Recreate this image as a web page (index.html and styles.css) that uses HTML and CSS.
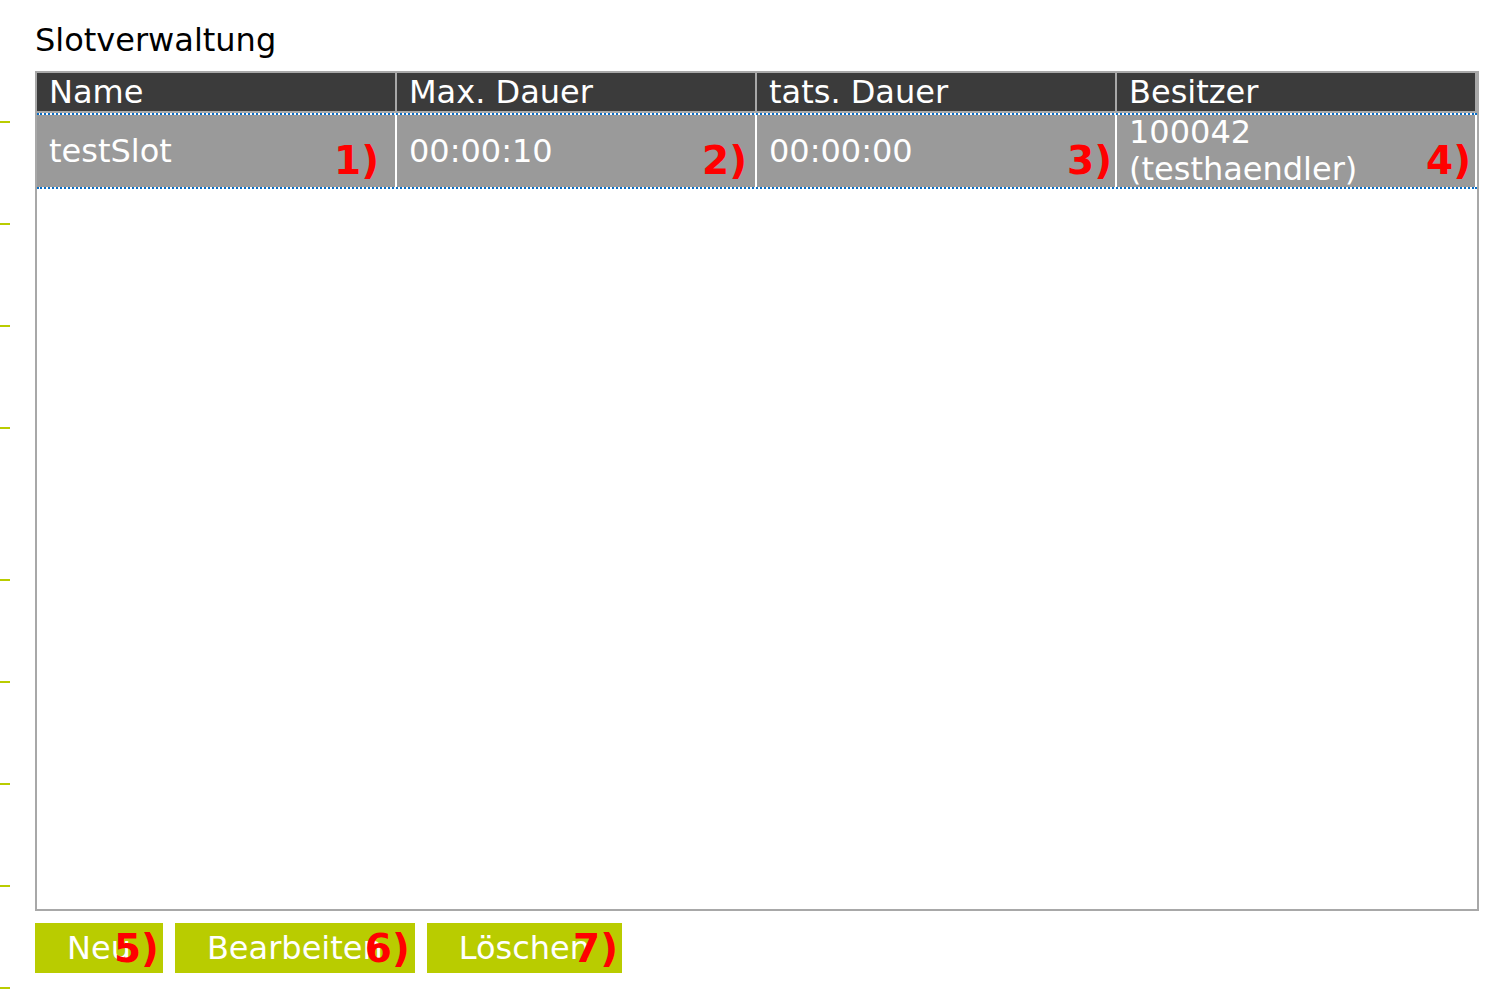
FILE: index.html
```html
<!DOCTYPE html>
<html lang="de">
<head>
<meta charset="utf-8">
<title>Slotverwaltung</title>
<link rel="stylesheet" href="styles.css">
</head>
<body>
<div class="ticks">
  <span class="tick"></span>
  <span class="tick"></span>
  <span class="tick"></span>
  <span class="tick tick-gap"></span>
  <span class="tick"></span>
  <span class="tick"></span>
  <span class="tick"></span>
  <span class="tick"></span>
  <span class="tick"></span>
</div>
<main class="page">
  <h1 class="title">Slotverwaltung</h1>
  <section class="grid">
    <div class="head-row">
      <div class="hcell">Name</div>
      <div class="hcell">Max. Dauer</div>
      <div class="hcell">tats. Dauer</div>
      <div class="hcell">Besitzer</div>
    </div>
    <div class="row">
      <div class="cell">testSlot<span class="mark m1">1)</span></div>
      <div class="cell">00:00:10<span class="mark m2">2)</span></div>
      <div class="cell">00:00:00<span class="mark m3">3)</span></div>
      <div class="cell cell-wrap">100042 (testhaendler)<span class="mark m4">4)</span></div>
    </div>
  </section>
  <div class="buttons">
    <button class="btn">Neu<span class="mark bm m5">5)</span></button>
    <button class="btn">Bearbeiten<span class="mark bm m6">6)</span></button>
    <button class="btn">Löschen<span class="mark bm m7">7)</span></button>
  </div>
</main>
</body>
</html>
```
FILE: styles.css
```css
html, body {
  margin: 0;
  padding: 0;
  background: #ffffff;
}
body {
  font-family: "DejaVu Sans", "Liberation Sans", sans-serif;
  font-size: 32px;
  color: #000;
  position: relative;
  width: 1494px;
  height: 997px;
  overflow: hidden;
}
.ticks {
  position: absolute;
  left: 0;
  top: 121px;
  display: flex;
  flex-direction: column;
}
.tick {
  display: block;
  width: 10px;
  height: 2px;
  background: #b9cc00;
  margin-bottom: 100px;
}
.tick-gap {
  margin-bottom: 150px;
}
.tick:last-child {
  margin-bottom: 0;
}
.page {
  padding: 22px 15px 0 35px;
}
.title {
  margin: 0 0 12px 0;
  font-size: 32px;
  font-weight: normal;
  line-height: 37px;
  color: #000;
}
.grid {
  width: 1440px;
  height: 836px;
  border: 2px solid #a8a8a8;
  background: #fff;
}
.head-row {
  display: grid;
  grid-template-columns: repeat(4, 360px);
}
.hcell {
  height: 38px;
  line-height: 39px;
  background: #3b3b3b;
  color: #fff;
  padding: 0 0 0 12px;
  border-right: 2px solid #a8a8a8;
  border-bottom: 2px solid #a8a8a8;
  white-space: nowrap;
  overflow: hidden;
}
.row {
  display: grid;
  grid-template-columns: repeat(4, 360px);
  border-top: 2px dotted #0a6cc4;
  border-bottom: 2px dotted #0a6cc4;
}
.cell {
  position: relative;
  height: 72px;
  display: flex;
  align-items: center;
  background: #9a9a9a;
  color: #fff;
  padding: 1px 10px 0 12px;
  box-sizing: border-box;
  border-right: 2px solid #ffffff;
  line-height: 37px;
}
.cell-wrap {
  padding-top: 0;
}
.mark {
  position: absolute;
  font-family: "DejaVu Sans", "Liberation Sans", sans-serif;
  font-weight: bold;
  font-size: 39px;
  line-height: 39px;
  color: #ff0000;
  bottom: 7px;
}
.m1 { right: 16px; }
.m2 { right: 8px; }
.m3 { right: 3px; }
.m4 { right: 4px; }
.buttons {
  display: flex;
  gap: 12px;
  margin-top: 12px;
}
.btn {
  position: relative;
  height: 50px;
  padding: 0 32px;
  border: 0;
  margin: 0;
  background: #b9cc00;
  color: #fff;
  font-family: "DejaVu Sans", "Liberation Sans", sans-serif;
  font-size: 32px;
  line-height: 50px;
  cursor: pointer;
}
.bm { bottom: 5px; }
.m5 { right: 4px; }
.m6 { right: 5px; }
.m7 { right: 4px; }
```
